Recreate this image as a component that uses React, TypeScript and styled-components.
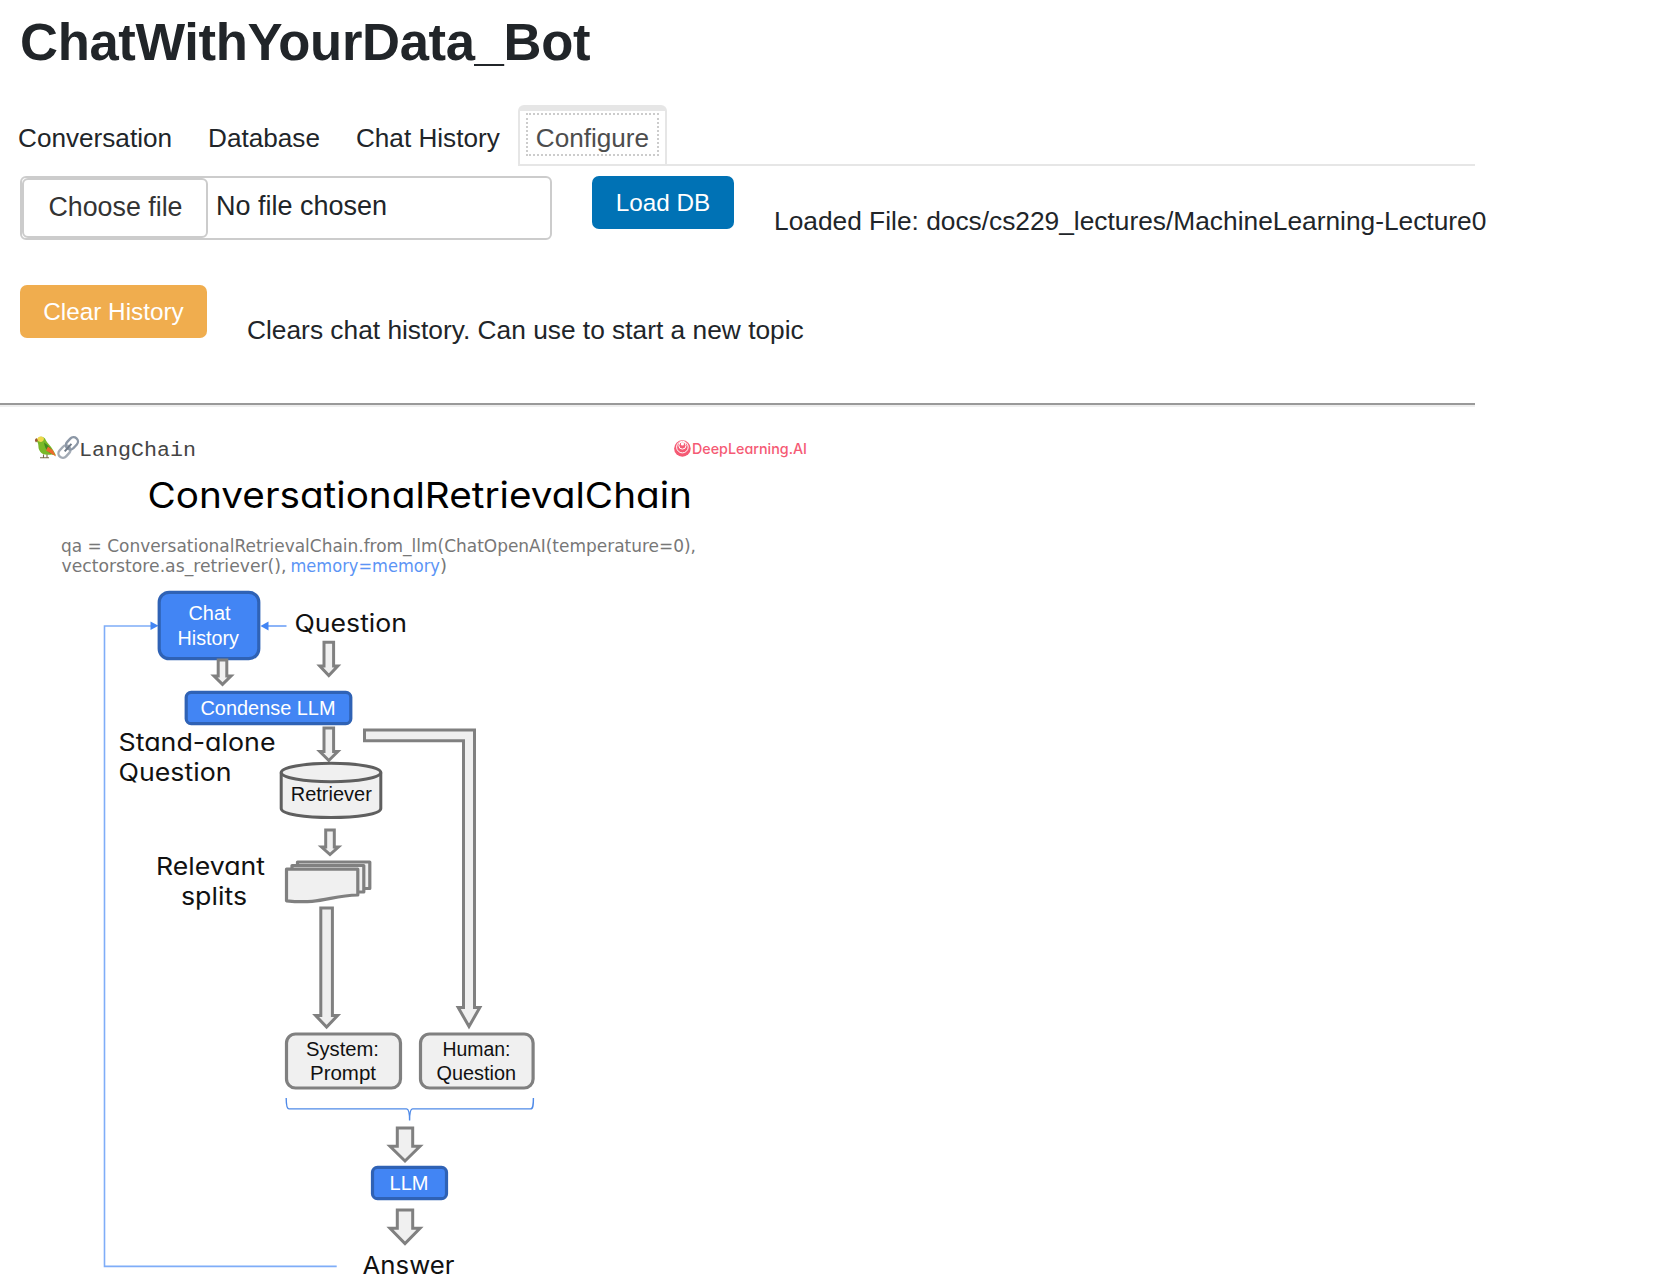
import React from "react";
import styled, { createGlobalStyle } from "styled-components";

const GlobalStyle = createGlobalStyle`
  * { box-sizing: border-box; }
  body {
    margin: 0;
    background: #fff;
    color: #212529;
    font-family: "Liberation Sans", Arial, sans-serif;
    overflow: hidden;
  }
`;

const Page = styled.div`
  height: 1279px;
  overflow: hidden;
  display: flex;
  flex-direction: column;
`;

const Title = styled.h1`
  margin: 0;
  padding: 11px 0 0 20px;
  height: 105px;
  font-size: 52.6px;
  line-height: 62px;
  letter-spacing: -0.35px;
  font-weight: 700;
  white-space: nowrap;
`;

const TabBar = styled.nav`
  display: flex;
  width: 1475px;
  height: 61px;
  border-bottom: 2px solid #e6e6e6;
`;

const Tab = styled.button<{ $active?: boolean }>`
  height: ${(p) => (p.$active ? 59 : 61)}px;
  padding: ${(p) => (p.$active ? "2px 6px 8px" : "12px 18px 8px")};
  border: 0 solid #e6e6e6;
  border-width: ${(p) => (p.$active ? "6px 2px 0" : "0")};
  border-radius: 6px 6px 0 0;
  background: #fff;
  color: ${(p) => (p.$active ? "#4d4d4d" : "#212529")};
  font: 26.15px/34px "Liberation Sans", Arial, sans-serif;
  white-space: nowrap;
`;

const FocusRing = styled.span`
  display: block;
  height: 43px;
  padding: 0 8px;
  border: 2px dotted #ccc;
  line-height: 47px;
`;

const Row = styled.div<{ $top: number; $height: number }>`
  display: flex;
  align-items: flex-start;
  padding: ${(p) => p.$top}px 0 0 20px;
  height: ${(p) => p.$height}px;
`;

const FileInput = styled.div`
  display: flex;
  width: 532px;
  height: 64px;
  border: 2px solid #ccc;
  border-radius: 6px;
  font-size: 27px;
`;

const ChooseButton = styled.button`
  width: 186px;
  height: 60px;
  padding: 0 0 2px 1px;
  border: 2px solid #ccc;
  border-radius: 6px;
  background: #fff;
  color: #333;
  font: 26.8px/54px "Liberation Sans", Arial, sans-serif;
`;

const FileName = styled.span`
  padding-left: 8px;
  line-height: 56px;
`;

const ActionButton = styled.button<{ $color: string; $width: number; $gap?: number }>`
  width: ${(p) => p.$width}px;
  height: 53px;
  margin-left: ${(p) => p.$gap ?? 0}px;
  padding: 0;
  border: 0;
  border-radius: 7px;
  background: ${(p) => p.$color};
  color: #fff;
  font: 24.3px/53px "Liberation Sans", Arial, sans-serif;
`;

const Note = styled.p`
  margin: 29px 0 0 40px;
  font-size: 26.32px;
  line-height: 32px;
  white-space: nowrap;
`;

const Divider = styled.hr`
  width: 1475px;
  height: 4px;
  margin: 0;
  border: 0 solid;
  border-width: 2px 0;
  border-color: #999 transparent #eee;
`;

const Diagram = styled.svg`
  display: block;
  flex: none;
`;

const Label = styled.text<{ $size: number; $fill?: string; $font?: string; $weight?: number }>`
  font-family: ${(p) => p.$font ?? '"Liberation Sans", Arial, sans-serif'};
  font-size: ${(p) => p.$size}px;
  font-weight: ${(p) => p.$weight ?? 400};
  fill: ${(p) => p.$fill ?? "#111"};
  font-feature-settings: "cv11";
  white-space: pre;
`;

const GEO = 'Inter, "Open Sans", sans-serif';
const CODE = '"DejaVu Sans", Verdana, sans-serif';

type TextProps = {
  x: number;
  y: number;
  w: number;
  size: number;
  fill?: string;
  font?: string;
  weight?: number;
  children: string;
};

const T = ({ x, y, w, size, fill, font, weight, children }: TextProps) => (
  <Label
    x={x}
    y={y}
    textLength={w}
    lengthAdjust="spacingAndGlyphs"
    $size={size}
    $fill={fill}
    $font={font}
    $weight={weight}
  >
    {children}
  </Label>
);

type ArrowProps = { cx: number; top: number; neck: number; tip: number; shaft: number; head: number };

const Arrow = ({ cx, top, neck, tip, shaft, head }: ArrowProps) => (
  <path
    d={`M${cx - shaft} ${top}H${cx + shaft}V${neck}H${cx + head}L${cx} ${tip}L${cx - head} ${neck}H${cx - shaft}Z`}
    fill="#f0f0f0"
    stroke="#808080"
    strokeWidth="3"
  />
);

type BoxProps = { x: number; y: number; w: number; h: number; r: number; blue?: boolean };

const Box = ({ x, y, w, h, r, blue }: BoxProps) => (
  <rect
    x={x}
    y={y}
    width={w}
    height={h}
    rx={r}
    fill={blue ? "#4285f4" : "#f0f0f0"}
    stroke={blue ? "#2f62b5" : "#808080"}
    strokeWidth="3.2"
  />
);

const Parrot = () => (
  <g>
    <path d="M37 442c0-5 5-6 8-3 1 2 2 4 4 6 3 3 5 7 7 11l-4-1c-6 1-11 0-13-5-1-3 0-5-2-8z" fill="#79b928" />
    <path d="M44 443c5 3 8 7 10 12-4 0-9-4-10-12z" fill="#3e8a1e" />
    <path d="M46 451l10 6-3-6-5-4z" fill="#ec6a2c" />
    <path d="M37 441c0-5 6-5 7-2 0 3-3 4-5 3z" fill="#f0d84c" />
    <path d="M36.500 438.500c-2 1-2 3-.5 4.500l2-2z" fill="#9a5a34" />
    <path d="M43.500 455v3M47 455v3M40 458.200h9" stroke="#7a6a4a" strokeWidth="1.1" fill="none" />
  </g>
);

const ChainLink = () => (
  <g fill="none" strokeWidth="2.4" transform="rotate(-48 68.200 448)">
    <rect x="55.800" y="443.600" width="13.600" height="8.800" rx="4.400" stroke="#a3abb5" />
    <rect x="67" y="443.600" width="13.600" height="8.800" rx="4.400" stroke="#8c97a6" />
    <path d="M63 448H73" stroke="#6f7a88" strokeWidth="2" />
  </g>
);

const DeepLogo = () => (
  <g>
    <circle cx="682.4" cy="449" r="8.3" fill="#f55a74" />
    <g fill="none" stroke="#fff" strokeWidth="1">
      <circle cx="682.4" cy="447.6" r="5.8" />
      <circle cx="682.4" cy="446" r="3.6" />
    </g>
    <circle cx="682.4" cy="444.4" r="1.6" fill="#fff" />
  </g>
);

const TABS = ["Conversation", "Database", "Chat History"];

export default function App() {
  return (
    <Page>
      <GlobalStyle />
      <Title>ChatWithYourData_Bot</Title>
      <TabBar>
        {TABS.map((t) => (
          <Tab key={t}>{t}</Tab>
        ))}
        <Tab $active>
          <FocusRing>Configure</FocusRing>
        </Tab>
      </TabBar>
      <Row $top={10} $height={119}>
        <FileInput>
          <ChooseButton>Choose file</ChooseButton>
          <FileName>No file chosen</FileName>
        </FileInput>
        <ActionButton $color="#0072b5" $width={142} $gap={40}>
          Load DB
        </ActionButton>
        <Note>Loaded File: docs/cs229_lectures/MachineLearning-Lecture0</Note>
      </Row>
      <Row $top={0} $height={118}>
        <ActionButton $color="#f0ad4e" $width={187}>
          Clear History
        </ActionButton>
        <Note>Clears chat history. Can use to start a new topic</Note>
      </Row>
      <Divider />
      <Diagram width="860" height="872" viewBox="0 407.5 860 872">
        <Parrot />
        <ChainLink />
        <T x={79} y={456.5} w={117} size={20.5} fill="#444" font='"Liberation Mono", monospace'>LangChain</T>
        <DeepLogo />
        <T x={692} y={454.2} w={115} size={14.6} fill="#f55a74" font={GEO} weight={500}>DeepLearning.AI</T>
        <T x={147.5} y={508} w={544.5} size={36} fill="#000" font={GEO}>ConversationalRetrievalChain</T>
        <T x={61} y={552} w={635} size={17.5} fill="#777" font={CODE}>qa = ConversationalRetrievalChain.from_llm(ChatOpenAI(temperature=0),</T>
        <T x={61.5} y={572} w={225} size={17.5} fill="#777" font={CODE}>vectorstore.as_retriever(),</T>
        <T x={290.5} y={572} w={149.5} size={17.5} fill="#5b94f5" font={CODE}>memory=memory</T>
        <T x={440} y={572} w={7} size={17.5} fill="#777" font={CODE}>)</T>

        <path d="M336.7 1266.9H104.5V626.5H151" fill="none" stroke="#7fadf8" strokeWidth="1.6" />
        <path d="M150.5 622l8 4.3-8 4.3z" fill="#4285f4" />
        <Box x={159.2} y={592.8} w={99.6} h={66.4} r={10} blue />
        <path d="M286.5 626.5H267" stroke="#5b94f5" strokeWidth="1.4" />
        <path d="M268.5 622l-8 4.5 8 4.5z" fill="#4285f4" />
        <T x={188.5} y={620.6} w={42} size={19.6} fill="#fff">Chat</T>
        <T x={177.5} y={645} w={61.5} size={19.6} fill="#fff">History</T>
        <T x={294.5} y={632.7} w={112.5} size={24.2} font={GEO}>Question</T>
        <Arrow cx={328.8} top={642.8} neck={666.5} tip={676} shaft={4.8} head={9} />
        <Arrow cx={222.5} top={660.5} neck={676.5} tip={684.8} shaft={4.3} head={8.5} />
        <Box x={186.2} y={692.8} w={164.6} h={31.4} r={5} blue />
        <T x={200.5} y={715} w={135} size={19.6} fill="#fff">Condense LLM</T>
        <Arrow cx={328.8} top={728.5} neck={752} tip={761} shaft={4.8} head={9} />
        <T x={118.5} y={751.8} w={157} size={24.2} font={GEO}>Stand-alone</T>
        <T x={118.5} y={781.8} w={113} size={24.2} font={GEO}>Question</T>

        <g fill="#f0f0f0" stroke="#5f5f5f" strokeWidth="3">
          <path d="M281.2 773V809C281.2 821 380.8 821 380.8 809V773" />
          <ellipse cx="331" cy="773" rx="49.8" ry="9.3" />
        </g>
        <T x={290.8} y={801.7} w={81} size={19.6}>Retriever</T>
        <path
          d="M364.5 730.5H474.5V1008H479.8L469 1027L458.2 1008H463.5V741.2H364.5Z"
          fill="#f0f0f0"
          stroke="#808080"
          strokeWidth="3"
        />
        <Arrow cx={330} top={830.5} neck={847.5} tip={855} shaft={4.3} head={8.4} />
        <T x={156} y={875} w={109} size={24.2} font={GEO}>Relevant</T>
        <T x={181} y={905} w={66} size={24.2} font={GEO}>splits</T>
        <g fill="#f0f0f0" stroke="#808080" strokeWidth="3.2" strokeLinejoin="round">
          <path d="M297.500 862.500H369.800V889H360V880H297.500Z" />
          <path d="M292 866H363.800V892.500H354V880H292Z" />
          <path d="M286.500 869.700H357.800V895.500C330 896 322 905 286.500 901.300Z" />
        </g>
        <Arrow cx={326.6} top={908.5} neck={1016} tip={1027.5} shaft={5.8} head={11} />

        <Box x={286.5} y={1034.5} w={114} h={54} r={9} />
        <Box x={420.5} y={1034.5} w={112.6} h={54} r={9} />
        <T x={306} y={1056} w={73} size={19.6}>System:</T>
        <T x={310} y={1080} w={66} size={19.6}>Prompt</T>
        <T x={442.5} y={1056} w={68} size={19.6}>Human:</T>
        <T x={436.5} y={1080} w={79.5} size={19.6}>Question</T>
        <path
          d="M286.2 1098.5C286.2 1106 286.8 1109.4 289 1109.4H406.5Q409.6 1109.4 409.6 1121Q409.6 1109.4 412.5 1109.4H530.5C533 1109.4 533.4 1106 533.4 1098.5"
          fill="none"
          stroke="#4f8ae8"
          strokeWidth="1.4"
        />
        <Arrow cx={405} top={1128.5} neck={1146.8} tip={1161.5} shaft={7.7} head={15} />
        <Box x={372.5} y={1167.8} w={74} h={31.4} r={5} blue />
        <T x={389.5} y={1190.7} w={39} size={19.6} fill="#fff">LLM</T>
        <Arrow cx={405} top={1210.5} neck={1228.8} tip={1244} shaft={7.7} head={15} />
        <T x={362.5} y={1274} w={92} size={24.2} font={GEO}>Answer</T>
      </Diagram>
    </Page>
  );
}
